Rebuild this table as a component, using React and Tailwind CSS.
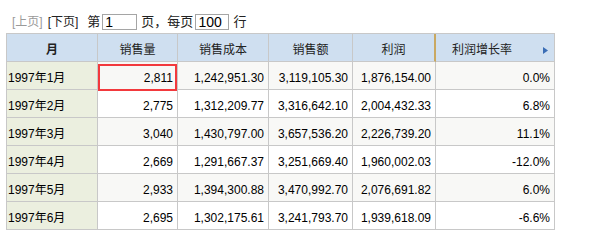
import React from "react";

const rows = [
  ["1997年1月", "2,811", "1,242,951.30", "3,119,105.30", "1,876,154.00", "0.0%"],
  ["1997年2月", "2,775", "1,312,209.77", "3,316,642.10", "2,004,432.33", "6.8%"],
  ["1997年3月", "3,040", "1,430,797.00", "3,657,536.20", "2,226,739.20", "11.1%"],
  ["1997年4月", "2,669", "1,291,667.37", "3,251,669.40", "1,960,002.03", "-12.0%"],
  ["1997年5月", "2,933", "1,394,300.88", "3,470,992.70", "2,076,691.82", "6.0%"],
  ["1997年6月", "2,695", "1,302,175.61", "3,241,793.70", "1,939,618.09", "-6.6%"],
];

const font = { fontFamily: '"Liberation Sans", "Noto Sans CJK SC", sans-serif' };

export default function App() {
  return (
    <div className="relative w-[590px] h-[240px] bg-white text-[12px] text-black" style={font}>
      <div className="flex items-center h-[33px] pt-[11px] text-[12px]">
        <span className="ml-[12px] text-[#9a9a9a]">[上页]</span>
        <span className="ml-[5px] text-[#222]">[下页]</span>
        <span className="ml-[9px] text-[13px] text-[#222]">第</span>
        <div className="ml-[2px] w-[35px] h-[16px] border border-[#a5a5a5] flex items-center pl-[2px] text-[14px] leading-none text-black">1</div>
        <span className="ml-[4px] text-[13px] text-[#222]">页，每页</span>
        <div className="ml-[2px] w-[34px] h-[16px] border border-[#a5a5a5] flex items-center pl-[2px] text-[14px] leading-none text-black">100</div>
        <span className="ml-[4px] text-[13px] text-[#222]">行</span>
      </div>
      <div className="ml-[6px] w-[549px] border-l border-t border-[#c8c8c8] grid grid-cols-[91px_80px_91px_84px_83px_119px]">
        <div className="h-[28px] bg-[#cfdff0] border-r border-b border-[#c8c8c8] flex items-center justify-center pt-[5px] font-bold text-[#222]">月</div>
        <div className="h-[28px] bg-[#cfdff0] border-r border-b border-[#c8c8c8] flex items-center justify-center pt-[5px] text-[#222]">销售量</div>
        <div className="h-[28px] bg-[#cfdff0] border-r border-b border-[#c8c8c8] flex items-center justify-center pt-[5px] text-[#222]">销售成本</div>
        <div className="h-[28px] bg-[#cfdff0] border-r border-b border-[#c8c8c8] flex items-center justify-center pt-[5px] text-[#222]">销售额</div>
        <div className="h-[28px] bg-[#cfdff0] border-r-2 border-r-[#c9a862] border-b border-b-[#c8c8c8] flex items-center justify-center pt-[5px] text-[#222]">利润</div>
        <div className="relative h-[28px] bg-[#cfdff0] border-r border-b border-[#c8c8c8] flex items-center pl-[16px] pt-[5px] text-[#222]">
          利润增长率
          <svg className="absolute right-[6px] top-[13px]" width="5" height="7" viewBox="0 0 5 7">
            <polygon points="0,0 5,3.5 0,7" fill="#3a6db5" />
          </svg>
        </div>
        {rows.map((r, i) => {
          const bg = i % 2 === 0 ? "bg-[#f8f8f6]" : "bg-white";
          return (
            <React.Fragment key={i}>
              <div className="h-[28px] bg-[#ebefdf] border-r border-b border-[#c8c8c8] flex items-center pl-[1px] pt-[5px]">{r[0]}</div>
              {r.slice(1).map((c, j) => (
                <div
                  key={j}
                  className={`h-[28px] ${bg} border-r border-b border-[#c8c8c8] flex items-center justify-end pr-[4px] pt-[5px]`}
                >
                  {c}
                </div>
              ))}
            </React.Fragment>
          );
        })}
      </div>
      <div className="absolute left-[98px] top-[64px] w-[79px] h-[27px] border-2 border-[#f2393d] pointer-events-none"></div>
    </div>
  );
}
